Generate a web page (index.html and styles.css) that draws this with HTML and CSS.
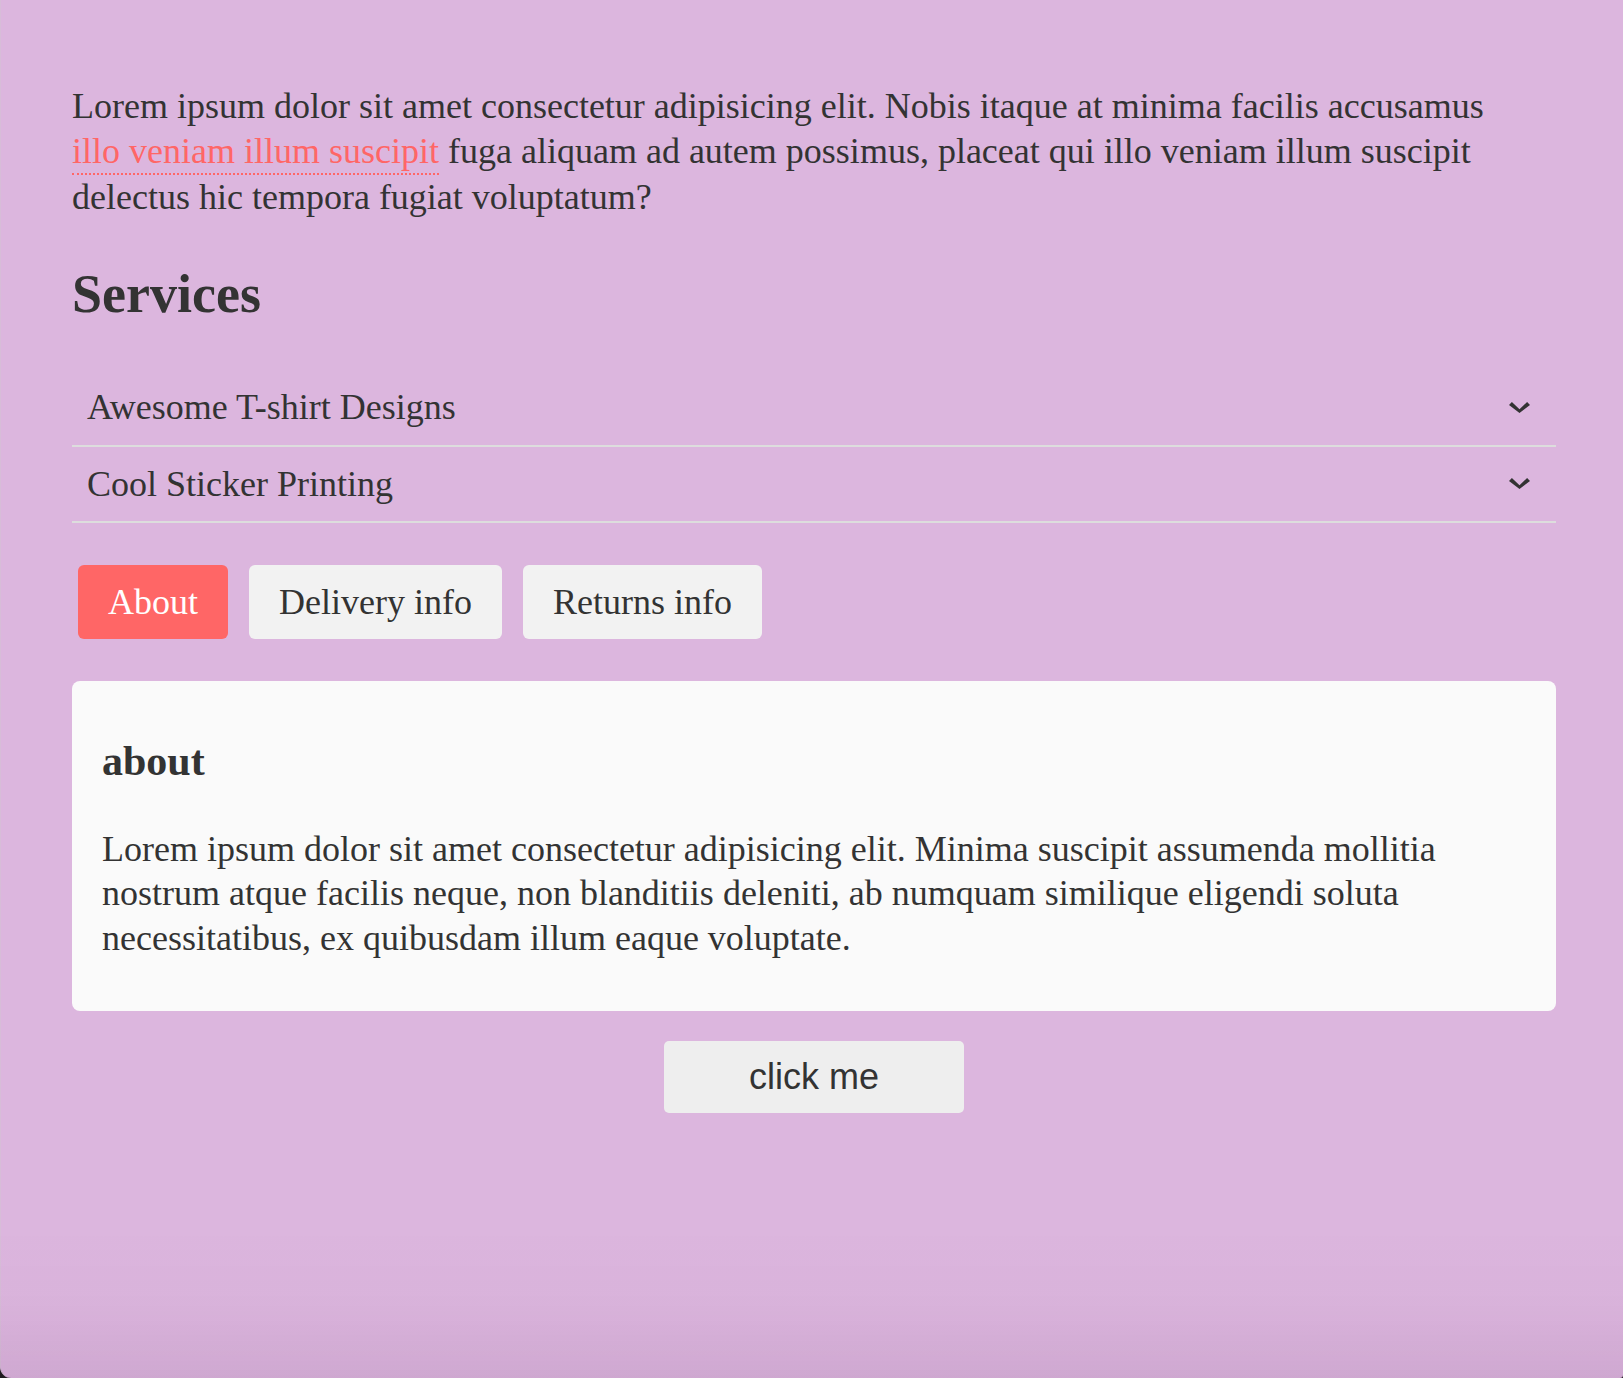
FILE: index.html
```html
<!DOCTYPE html>
<html lang="en">
<head>
<meta charset="utf-8">
<title>Services</title>
<link rel="stylesheet" href="styles.css">
</head>
<body>
<main class="page">
  <p class="intro">Lorem ipsum dolor sit amet consectetur adipisicing elit. Nobis itaque at minima facilis accusamus <a href="#" class="link">illo veniam illum suscipit</a> fuga aliquam ad autem possimus, placeat qui illo veniam illum suscipit delectus hic tempora fugiat voluptatum?</p>

  <h2 class="section-title">Services</h2>

  <div class="accordion">
    <div class="acc-row">
      <span class="acc-label">Awesome T-shirt Designs</span>
      <svg class="chevron" width="21" height="11" viewBox="0 0 21 11" aria-hidden="true"><polygon points="0,2.9 2.9,0 10.5,7.3 18.1,0 21,2.9 10.5,11" fill="#333"/></svg>
    </div>
    <div class="acc-row">
      <span class="acc-label">Cool Sticker Printing</span>
      <svg class="chevron" width="21" height="11" viewBox="0 0 21 11" aria-hidden="true"><polygon points="0,2.9 2.9,0 10.5,7.3 18.1,0 21,2.9 10.5,11" fill="#333"/></svg>
    </div>
  </div>

  <div class="tabs">
    <button class="tab tab-active">About</button>
    <button class="tab">Delivery info</button>
    <button class="tab">Returns info</button>
  </div>

  <section class="panel">
    <h3 class="panel-title">about</h3>
    <p class="panel-text">Lorem ipsum dolor sit amet consectetur adipisicing elit. Minima suscipit assumenda mollitia nostrum atque facilis neque, non blanditiis deleniti, ab numquam similique eligendi soluta necessitatibus, ex quibusdam illum eaque voluptate.</p>
  </section>

  <div class="actions">
    <button class="click-btn">click me</button>
  </div>
</main>
<div class="window-shade"></div>
</body>
</html>
```
FILE: styles.css
```css
html {
  background: #1c1c1c;
}

body {
  margin: 0;
  min-height: 100vh;
  box-sizing: border-box;
  background: #dcb6de;
  border-left: 1px solid #d7bdd8;
  border-bottom-left-radius: 11px;
  border-bottom-right-radius: 3px;
  color: #333333;
  font-family: "Liberation Serif", "Times New Roman", serif;
  font-size: 36px;
  line-height: 1.24;
}

.page {
  width: 1484px;
  margin-left: 71px;
  padding-top: 48px;
}

.intro {
  margin: 36px 0 0;
}

.link {
  display: inline-block;
  color: #ff6666;
  text-decoration: none;
  border-bottom: 2px dotted #ff6666;
}

.section-title {
  font-size: 54px;
  line-height: normal;
  font-weight: bold;
  margin: 43px 0 45px;
}

.accordion {
  display: flex;
  flex-direction: column;
}

.acc-row {
  display: flex;
  align-items: center;
  justify-content: space-between;
  padding: 15px 26px 15px 15px;
  border-bottom: 2px solid #dddddd;
}

.acc-label {
  font-size: 36px;
}

.chevron {
  display: block;
}

.tabs {
  display: flex;
  gap: 21px;
  padding-left: 6px;
  margin-top: 42px;
}

.tab {
  font-family: "Liberation Serif", "Times New Roman", serif;
  font-size: 36px;
  line-height: 1.24;
  color: #333333;
  background: #f2f2f2;
  border: none;
  border-radius: 6px;
  padding: 14.5px 30px;
  margin: 0;
  cursor: pointer;
}

.tab-active {
  background: #ff6666;
  color: #ffffff;
}

.panel {
  margin-top: 42px;
  background: #fafafa;
  border-radius: 8px;
  padding: 14px 30px;
}

.panel-title {
  font-size: 42px;
  line-height: normal;
  font-weight: bold;
  margin: 42px 0;
}

.panel-text {
  margin: 36px 0;
}

.actions {
  display: flex;
  justify-content: center;
  margin-top: 30px;
}

.click-btn {
  width: 300px;
  font-family: "Liberation Sans", Arial, sans-serif;
  font-size: 36px;
  line-height: normal;
  color: #333333;
  background: #eeeeee;
  border: none;
  border-radius: 5px;
  padding: 15px 0;
  cursor: pointer;
}

.window-shade {
  position: fixed;
  left: 0;
  right: 0;
  bottom: 0;
  height: 150px;
  pointer-events: none;
  background: linear-gradient(to bottom, rgba(80, 20, 80, 0) 0%, rgba(80, 20, 80, 0.02) 50%, rgba(60, 10, 60, 0.08) 100%);
}
```
